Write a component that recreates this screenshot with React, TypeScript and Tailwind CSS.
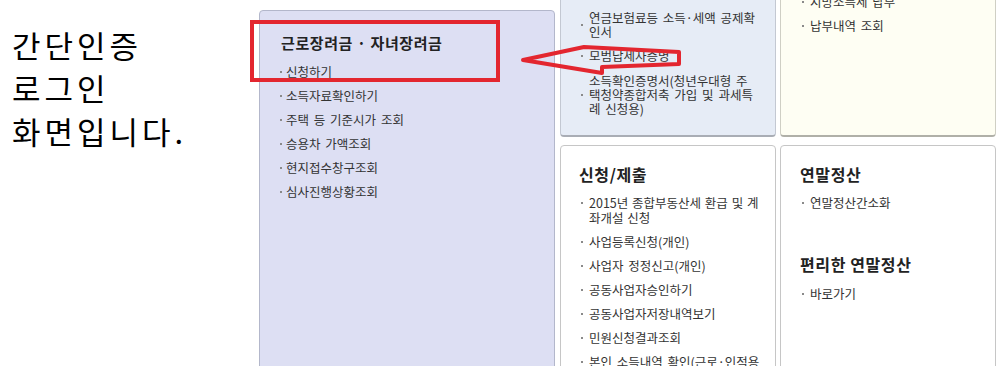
const Dot = ({ className = "" }: { className?: string }) => (
  <span className={`inline-block h-[2px] w-[2px] shrink-0 bg-[#8a8a8a] ${className}`} />
);

function Item({ text, gap = "gap-[4px]" }: { text: string; gap?: string }) {
  return (
    <li className={`flex items-center ${gap} ml-[2px] text-[12.5px] leading-[15px] text-[#333] [word-spacing:2px]`}>
      <Dot />
      <span className="whitespace-nowrap">{text}</span>
    </li>
  );
}

export default function App() {
  return (
    <div className="relative h-[366px] w-[1000px] overflow-hidden bg-white font-['Noto_Sans_CJK_KR',sans-serif]">
      <div className="flex">
        {/* caption */}
        <div className="w-[259px] shrink-0 pl-[12px] pt-[23px] text-[31px] leading-[43px] tracking-[4px] text-black">
          간단인증
          <br />
          로그인
          <br />
          화면입니다.
        </div>

        {/* 근로장려금 card */}
        <div className="mt-[10px] h-[380px] w-[296px] shrink-0 rounded-[4px] border border-[#b3b7cb] bg-[#dddff3] pl-[18px] pt-[22px]">
          <h3 className="ml-[3px] text-[15px] font-bold leading-[20px] tracking-[0.6px] text-[#222]">근로장려금 · 자녀장려금</h3>
          <ul className="mt-[11px] flex flex-col gap-[9px]">
            {["신청하기", "소득자료확인하기", "주택 등 기준시가 조회", "승용차 가액조회", "현지접수창구조회", "심사진행상황조회"].map((t) => (
              <Item key={t} text={t} />
            ))}
          </ul>
        </div>

        {/* right grid */}
        <div className="-mt-[40px] ml-[5px] grid grid-cols-[216px_216px] grid-rows-[177px_260px] gap-x-[4px] gap-y-[8px]">
          <div className="rounded-[4px] border border-[#c3c8d2] border-b-2 border-b-[#a9adb5] bg-[#e6ecf6] pl-[18px] pt-[50px]">
            <ul className="flex flex-col gap-[10px] text-[12.5px] leading-[14px] text-[#333] [word-spacing:2px]">
              <li className="ml-[2px] flex items-center gap-[6px]">
                <Dot />
                <span className="whitespace-nowrap">
                  연금보험료등 소득·세액 공제확
                  <br />
                  인서
                </span>
              </li>
              <li className="ml-[2px] flex items-center gap-[6px]">
                <Dot />
                <span>모범납세자증명</span>
              </li>
              <li className="ml-[2px] mt-[1px] flex items-center gap-[6px]">
                <Dot />
                <span className="whitespace-nowrap">
                  소득확인증명서(청년우대형 주
                  <br />
                  택청약종합저축 가입 및 과세특
                  <br />
                  례 신청용)
                </span>
              </li>
            </ul>
          </div>

          <div className="rounded-[4px] border border-[#cfcfc4] border-b-2 border-b-[#b0b0a8] bg-[#fefef3] pl-[19px] pt-[33px]">
            <ul className="flex flex-col gap-[9px]">
              <Item text="지방소득세 납부" gap="gap-[6px]" />
              <Item text="납부내역 조회" gap="gap-[6px]" />
            </ul>
          </div>

          <div className="rounded-[4px] border border-[#c6c6c6] bg-white pl-[18px] pt-[18px]">
            <h3 className="text-[16px] font-bold leading-[20px] tracking-[0.6px] text-[#222]">신청/제출</h3>
            <ul className="mt-[11px] flex flex-col gap-[9px] text-[12.5px] leading-[15px] text-[#333]">
              <li className="ml-[2px] flex items-start gap-[6px] [word-spacing:1px]">
                <Dot className="mt-[7px]" />
                <span className="whitespace-nowrap">
                  2015년 종합부동산세 환급 및 계
                  <br />
                  좌개설 신청
                </span>
              </li>
              {["사업등록신청(개인)", "사업자 정정신고(개인)", "공동사업자승인하기", "공동사업자저장내역보기", "민원신청결과조회", "본인 소득내역 확인(근로·인적용"].map((t) => (
                <Item key={t} text={t} gap="gap-[6px]" />
              ))}
            </ul>
          </div>

          <div className="rounded-[4px] border border-[#c6c6c6] bg-white pl-[19px] pt-[18px]">
            <h3 className="text-[16px] font-bold leading-[20px] tracking-[0.6px] text-[#222]">연말정산</h3>
            <ul className="mt-[11px] flex flex-col gap-[9px]">
              <Item text="연말정산간소화" gap="gap-[6px]" />
            </ul>
            <h3 className="mt-[44px] text-[16px] font-bold leading-[20px] tracking-[0.6px] text-[#222]">편리한 연말정산</h3>
            <ul className="mt-[12px] flex flex-col gap-[9px]">
              <Item text="바로가기" gap="gap-[6px]" />
            </ul>
          </div>
        </div>
      </div>

      {/* annotation: red box */}
      <div className="absolute left-[250px] top-[20px] h-[62px] w-[250px] border-4 border-[#e3262f]" />

      {/* annotation: arrow */}
      <svg className="absolute left-0 top-0" width="1000" height="366" viewBox="0 0 1000 366">
        <polygon
          points="523,60 584,47 679,52 679,64 602,67 602,73"
          fill="none"
          stroke="#e3262f"
          strokeWidth="4"
          strokeLinejoin="round"
        />
      </svg>
    </div>
  );
}
